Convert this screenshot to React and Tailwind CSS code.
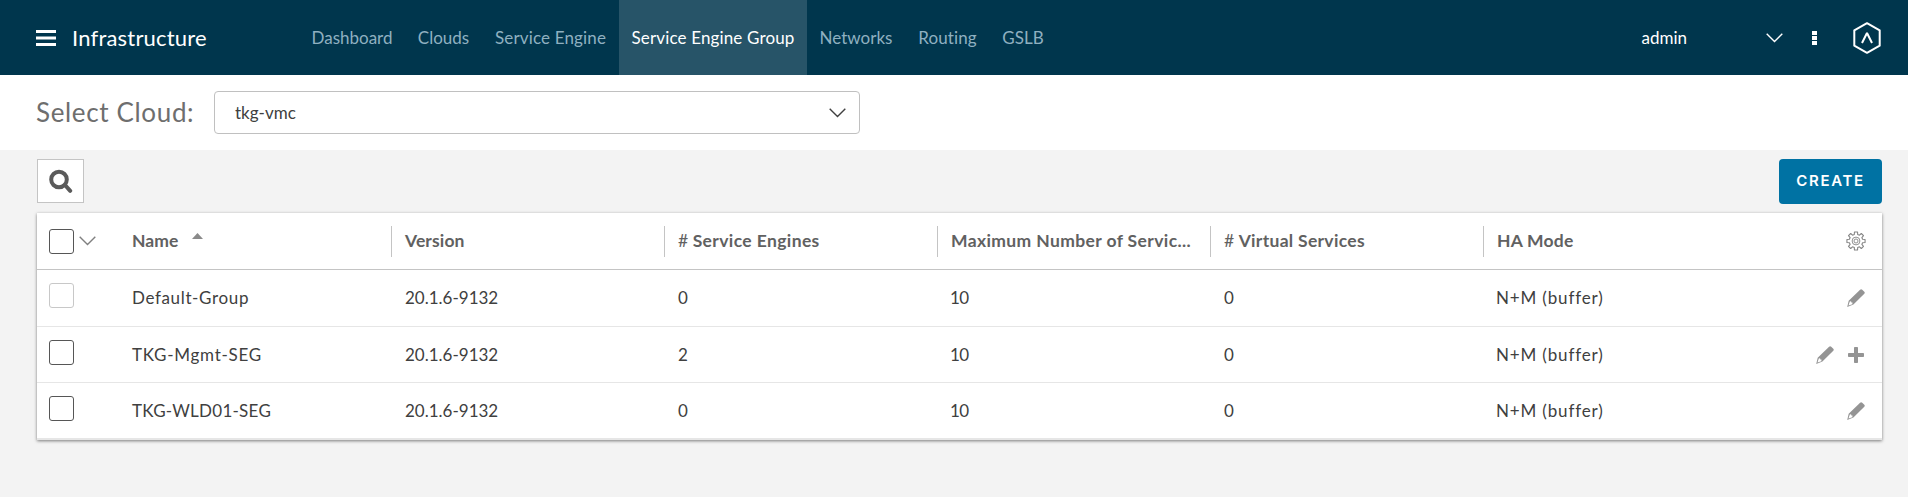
const nav = [
  ["Dashboard", "w-[106px]"],
  ["Clouds", "w-[77px]"],
  ["Service Engine", "w-[137px] tracking-[0.15px]"],
  ["Service Engine Group", "w-[188px] bg-[#275468] text-white tracking-[0.15px]"],
  ["Networks", "w-[98px]"],
  ["Routing", "w-[85px] tracking-[0.1px]"],
  ["GSLB", "w-[66px]"],
];

const heads = [
  ["", "Name", "tracking-[0.1px]"],
  ["", "Version", "tracking-[0.13px]"],
  ["# ", "Service Engines", "tracking-[0.38px]"],
  ["", "Maximum Number of Servic...", "tracking-[0.38px]"],
  ["# ", "Virtual Services", "tracking-[0.3px]"],
  ["", "HA Mode", "tracking-[0.25px]"],
];

const rows = [
  { name: "Default-Group", engines: "0", disabled: true, size: "h-[57px]", track: "tracking-[0.64px]" },
  { name: "TKG-Mgmt-SEG", engines: "2", add: true, size: "h-14", track: "tracking-[0.74px]" },
  { name: "TKG-WLD01-SEG", engines: "0", size: "h-[57px]", track: "tracking-[0.28px]" },
];

function Chevron({ className }) {
  return (
    <svg className={className} width="17" height="10" viewBox="0 0 17 10" fill="none" stroke="currentColor" strokeWidth="1.400">
      <path d="M0.7 0.8 8.5 8.6 16.3 0.8" />
    </svg>
  );
}

function Pencil() {
  return (
    <svg width="18" height="18" viewBox="0 0 18 18" fill="#949494">
      <path fillRule="evenodd" d="M13.1.7a1.6 1.6 0 0 1 2.1 0l2.1 2a1.6 1.6 0 0 1 0 2.1L6.4 15.6.2 17.9l1.5-6.1ZM2.8 12.6 1.5 16.6l3.8-1.3.2-1.7-1.2-.2-.2-1.1Z" />
    </svg>
  );
}

function Plus() {
  return (
    <svg width="16" height="16" viewBox="0 0 16 16" fill="#949494">
      <path d="M6.8 0h2.4q.8 0 .8.8V6h5.2q.8 0 .8.8v2.4q0 .8-.8.8H10v5.2q0 .8-.8.8H6.8q-.8 0-.8-.8V10H.8Q0 10 0 9.200V6.800Q0 6 .8 6H6V.8Q6 0 6.800 0Z" />
    </svg>
  );
}

function Gear() {
  const pts = [];
  for (let i = 0; i < 8; i++) {
    const a = (i * Math.PI) / 4;
    for (const [d, r] of [[-0.25, 6.8], [-0.17, 9.2], [0.17, 9.2], [0.25, 6.8]]) {
      pts.push(`${(10 + r * Math.sin(a + d)).toFixed(2)},${(10 - r * Math.cos(a + d)).toFixed(2)}`);
    }
  }
  return (
    <svg width="20" height="20" viewBox="0 0 20 20" fill="none" stroke="#858585" strokeWidth="1.1" strokeLinejoin="round">
      <polygon points={pts.join(" ")} />
      <circle cx="10" cy="10" r="3.9" strokeWidth="0.9" />
      <circle cx="10" cy="10" r="2" strokeWidth="0.9" />
    </svg>
  );
}

export default function App() {
  return (
    <div className="flex h-[497px] w-[1908px] flex-col overflow-hidden bg-[#f3f3f3] font-[Lato,sans-serif] text-[17px]">
      <header className="flex h-[75px] shrink-0 items-center bg-[#00364d] text-white">
        <div className="flex w-[299px] items-center gap-4 pl-9">
          <svg width="20" height="16" viewBox="0 0 20 16" fill="currentColor">
            <path d="M0 0h20v3H0zM0 6.500h20v3H0zM0 13h20v3H0z" />
          </svg>
          <span className="text-[22px] tracking-[0.2px]">Infrastructure</span>
        </div>
        <nav className="flex h-full text-[#8fb0c0]">
          {nav.map(([t, c]) => (
            <a key={t} className={`flex h-full items-center justify-center whitespace-nowrap ${c}`}>{t}</a>
          ))}
        </nav>
        <div className="ml-auto flex items-center pr-[27px]">
          <span className="mr-[79px]">admin</span>
          <Chevron className="mr-[29px]" />
          <svg className="mr-9" width="5" height="14" viewBox="0 0 5 14" fill="currentColor"><path d="M0 0h5v4H0zM0 5h5v4H0zM0 10h5v4H0z" /></svg>
          <svg width="28" height="32" viewBox="0 0 28 32" fill="none" stroke="currentColor" strokeWidth="2" strokeLinejoin="round">
            <path d="M14 1.200 26.700 8.300V23.700L14 30.800 1.300 23.700V8.300Z" /><path d="M9 21 14 11 19 21" strokeLinejoin="bevel" />
          </svg>
        </div>
      </header>
      <section className="flex h-[75px] shrink-0 items-center bg-white pl-9">
        <span className="w-[178px] text-[26px] tracking-[0.65px] text-[#6e6e6e]">Select Cloud:</span>
        <div className="flex h-[43px] w-[646px] items-center justify-between rounded-[4px] border border-[#c0c0c0] pr-[13px] pl-5 text-[#404040]">
          <span>tkg-vmc</span>
          <Chevron />
        </div>
      </section>
      <main className="pt-[9px] pr-[26px] pl-[37px]">
        <div className="flex h-[54px] items-start justify-between">
          <button className="flex h-11 w-[47px] items-center justify-center border border-[#c4c4c4] bg-white">
            <svg width="24" height="24" viewBox="0 0 24 24" fill="none" stroke="#5a5a5a"><circle cx="10" cy="10.500" r="7.800" strokeWidth="4" /><path d="M16 16 21.200 21.800" strokeWidth="4" strokeLinecap="round" /></svg>
          </button>
          <button className="flex h-[45px] w-[103px] items-center justify-center rounded-[4px] bg-[#0072a3] font-[Inter,sans-serif] text-[15px] font-semibold tracking-[1.7px] text-white">CREATE</button>
        </div>
        <div className="h-[227px] bg-white shadow-[0_1px_3px_rgba(0,0,0,0.5)]">
          <div className="flex h-[57px] items-center border-b border-[#c4c4c4] text-[17.5px] font-bold text-[#616161]">
            <div className="flex w-[81px] items-center gap-[5px] pl-3">
              <span className="h-[25px] w-[25px] rounded-[3px] border border-[#565656]" />
              <Chevron className="text-[#808080]" />
            </div>
            {heads.map(([h, t, c], i) => (
              <div key={t} className={`flex h-[31px] w-[273px] shrink-0 items-center whitespace-pre ${i ? "border-l border-[#c4c4c4] pl-[13px]" : "pl-[14px]"}`}>
                {h && <span className="font-normal">{h}</span>}
                <span className={c}>{t}</span>
                {i === 0 && <svg className="mb-[10px] ml-[13px]" width="11" height="6" viewBox="0 0 11 6" fill="#8a8a8a"><path d="M5.500 0 11 6H0Z" /></svg>}
              </div>
            ))}
            <div className="flex flex-1 justify-end pr-4"><Gear /></div>
          </div>
          {rows.map((r, i) => (
            <div key={r.name} className={`flex items-center border-[#e6e6e6] text-[#404040] ${i === 2 ? "border-b-2" : "border-b"} ${r.size}`}>
              <div className="w-[81px] pb-[5px] pl-3">
                <span className={`block h-[25px] w-[25px] rounded-[3px] border ${r.disabled ? "border-[#c8c8c8]" : "border-[#565656]"}`} />
              </div>
              <div className={`w-[273px] shrink-0 pl-[14px] ${r.track}`}>{r.name}</div>
              <div className="w-[273px] shrink-0 pl-[14px]">20.1.6-9132</div>
              <div className="w-[273px] shrink-0 pl-[14px]">{r.engines}</div>
              <div className="w-[273px] shrink-0 pl-[13px] tracking-[-0.5px]">10</div>
              <div className="w-[273px] shrink-0 pl-[14px]">0</div>
              <div className="w-[273px] shrink-0 pl-[13px] tracking-[0.84px]">N+M (buffer)</div>
              <div className={`flex flex-1 items-center justify-end gap-[14px] ${r.add ? "pr-[18px]" : "pr-[17px]"}`}>
                <Pencil />
                {r.add && <Plus />}
              </div>
            </div>
          ))}
        </div>
      </main>
    </div>
  );
}
